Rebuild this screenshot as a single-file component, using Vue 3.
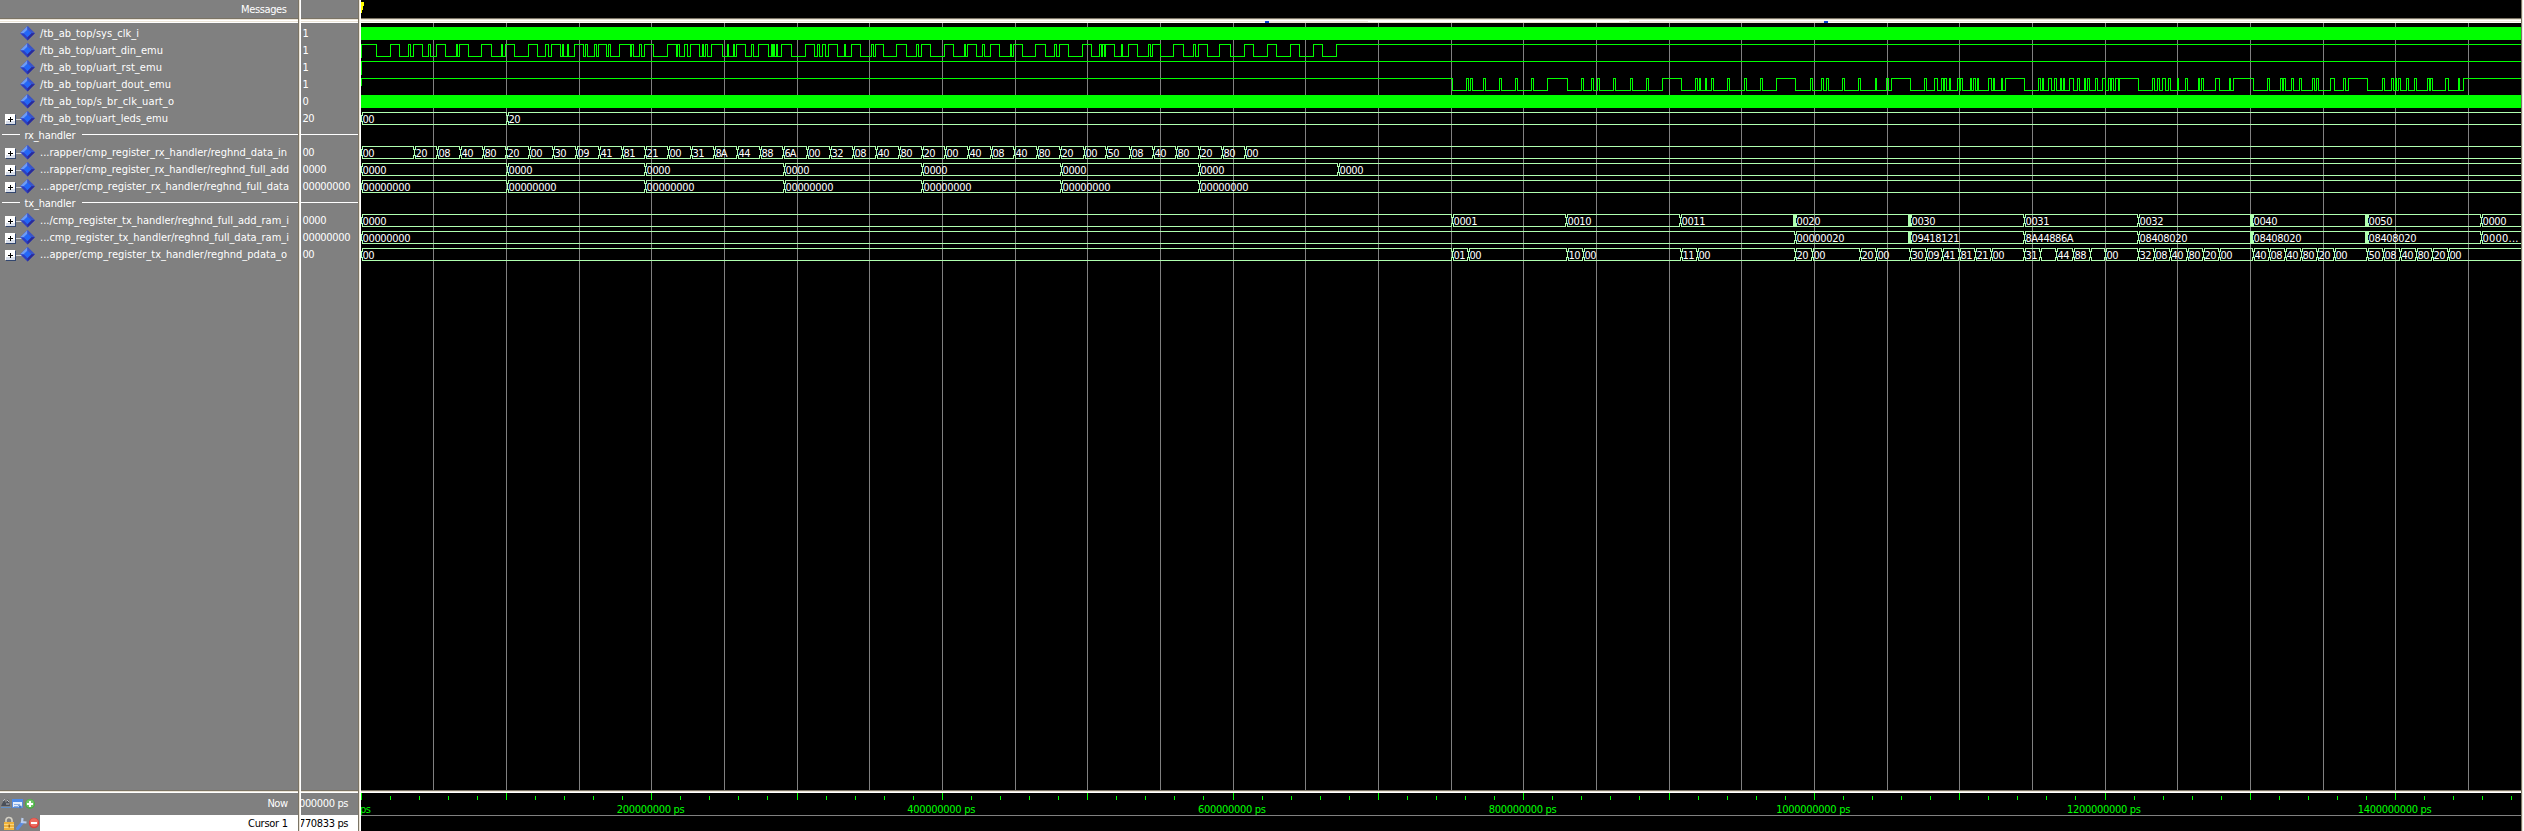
<script setup>
const X0 = 361
const H = 17

const onThirds = (origin, list) => list.map((v) => origin + Math.floor(v / 3))

const dinEdges = [
  ...onThirds(350, [79, 121, 148, 175, 181, 190, 217, 235, 241, 259, 286, 319, 322, 328, 355, 394, 424, 454, 457, 466, 493,
    535, 562, 586, 595, 604, 631, 637, 640, 652, 655, 673, 700, 706, 712, 733, 739, 745, 769, 775, 781, 808, 841, 844, 850,
    868, 874, 883, 910, 952, 979, 982, 988, 1003, 1012, 1021, 1048, 1057, 1060, 1066, 1072, 1084, 1117, 1132, 1135, 1150, 1153,
    1159, 1186, 1204, 1210, 1225, 1255, 1264, 1267, 1270, 1273, 1279, 1282, 1294, 1324, 1366, 1393, 1402, 1408, 1417, 1426,
    1435, 1462, 1483, 1486]),
  ...onThirds(840, [13, 16, 34, 61, 94, 100, 106, 130, 169, 199, 229, 235, 244, 271, 313, 340, 373, 376, 382, 409, 427, 433,
    451, 478, 511, 514, 520, 547, 586, 616, 643, 649, 658, 685, 727, 754, 778, 784, 787, 793, 796, 823, 844, 847, 865, 892,
    925, 931, 937, 961, 1000, 1030, 1060, 1066, 1075, 1102, 1138, 1171, 1213, 1240, 1282, 1309, 1351, 1378, 1420, 1447, 1489])
]
const doutEdges = [
  ...onThirds(1340, [337, 379, 385, 391, 397, 430, 436, 478, 484, 526, 532, 574, 580, 622, 682, 724, 730, 754, 760, 772, 778,
    820, 826, 871, 877, 919, 925, 967, 1024, 1066, 1072, 1078, 1081, 1096, 1099, 1114, 1120, 1162, 1168]),
  ...onThirds(1730, [43, 49, 91, 97, 139, 196, 241, 247, 274, 280, 289, 295, 337, 343, 385, 391, 436, 439, 469, 475, 484, 541,
    583, 589, 613, 622, 634, 640, 643, 649, 658, 661, 682, 688, 691, 697, 721, 724, 730, 736, 742, 745, 775, 784, 790, 793,
    814, 817, 826, 883, 925, 931, 937, 940, 955, 964, 973, 979, 991, 994, 1000, 1003, 1018, 1030, 1042, 1048, 1063, 1066,
    1072, 1078, 1096, 1102, 1117, 1126, 1135, 1141, 1144, 1150, 1156, 1165, 1168]),
  ...onThirds(2120, [55, 97, 103, 112, 118, 127, 136, 145, 151, 172, 175, 196, 202, 235, 238, 244, 250, 286, 298, 328, 331,
    340, 400, 442, 448, 481, 487, 490, 496, 514, 520, 538, 544, 577, 583, 589, 595, 631, 643, 670, 676, 685, 742, 787, 793,
    814, 820, 826, 829, 835, 841, 859, 865, 883, 889, 922, 928, 931, 937, 976, 985, 1015, 1018, 1030])
]

const wave = (edges, start) => {
  let d = `M0.5 ${start}V2.5`
  let high = true
  for (const e of edges) {
    high = !high
    d += `H${e - X0 + 0.5}V${high ? 2.5 : 14.5}`
  }
  return d + 'H2160'
}

const zip = (xs, vals, thick = []) => xs.map((x, i) => ({ x: x - X0, v: vals[i], thick: thick.includes(x) }))

const busPath = (items) => {
  let d = ''
  items.forEach((s, i) => {
    const end = i + 1 < items.length ? items[i + 1].x + 0.5 : 2160
    const a = s.x + 2.5
    const b = s.x + 1.5
    d += `M${b} 5.5V11.5M${a} 5.5V2.5H${end}M${a} 11.5V14.5H${end}`
    if (i + 1 < items.length) d += `M${end} 2.5V5.5M${end} 11.5V14.5`
  })
  return d
}

const leds = zip([360, 506], ['00', '20'])
const dataIn = zip(
  [360, 413, 436, 459, 482, 505, 528, 552, 575, 598, 621, 644, 667, 690, 713, 736, 759, 782, 806, 829, 852, 875, 898, 921, 944,
    967, 990, 1013, 1036, 1059, 1083, 1105, 1129, 1152, 1175, 1198, 1221, 1244],
  '00 20 08 40 80 20 00 30 09 41 81 21 00 31 8A 44 88 6A 00 32 08 40 80 20 00 40 08 40 80 20 00 50 08 40 80 20 80 00'.split(' '))
const rxX = [360, 506, 644, 783, 921, 1060, 1198]
const rxAdd = zip([...rxX, 1337], Array(8).fill('0000'))
const rxData = zip(rxX, Array(7).fill('00000000'))
const txAdd = zip([360, 1451, 1565, 1679, 1794, 1909, 2023, 2137, 2251, 2366, 2480],
  '0000 0001 0010 0011 0020 0030 0031 0032 0040 0050 0000'.split(' '), [1794, 1909, 2251, 2366])
const txData = zip([360, 1794, 1909, 2023, 2137, 2251, 2366, 2480],
  '00000000 00000020 09418121 8A44886A 08408020 08408020 08408020 0000...'.split(' '), [1909, 2251, 2366])
const pdata = zip(
  [360, 1451, 1467, 1566, 1582, 1680, 1696, 1794, 1811, 1859, 1875, 1909, 1925, 1941, 1958, 1974, 1990, 2023, 2039, 2055, 2072,
    2089, 2104, 2137, 2153, 2169, 2186, 2202, 2218, 2252, 2268, 2284, 2300, 2316, 2333, 2366, 2382, 2399, 2415, 2431, 2447],
  '00,01,00,10,00,11,00,20,00,20,00,30,09,41,81,21,00,31,,44,88,,00,32,08,40,80,20,00,40,08,40,80,20,00,50,08,40,80,20,00'.split(','))

const rows = [
  { name: '/tb_ab_top/sys_clk_i', w: 99, value: '1', kind: 'clock' },
  { name: '/tb_ab_top/uart_din_emu', w: 123, value: '1', kind: 'wave', d: wave(dinEdges, 15) },
  { name: '/tb_ab_top/uart_rst_emu', w: 122, value: '1', kind: 'wave', d: wave([], 15) },
  { name: '/tb_ab_top/uart_dout_emu', w: 131, value: '1', kind: 'wave', d: wave(doutEdges, 9) },
  { name: '/tb_ab_top/s_br_clk_uart_o', w: 134, value: '0', kind: 'clock' },
  { name: '/tb_ab_top/uart_leds_emu', w: 128, value: '20', kind: 'bus', items: leds },
  { name: 'rx_handler', w: 51, kind: 'divider' },
  { name: '...rapper/cmp_register_rx_handler/reghnd_data_in', w: 247, value: '00', kind: 'bus', items: dataIn },
  { name: '...rapper/cmp_register_rx_handler/reghnd_full_add', w: 249, value: '0000', kind: 'bus', items: rxAdd },
  { name: '...apper/cmp_register_rx_handler/reghnd_full_data', w: 249, value: '00000000', kind: 'bus', items: rxData },
  { name: 'tx_handler', w: 51, kind: 'divider' },
  { name: '.../cmp_register_tx_handler/reghnd_full_add_ram_i', w: 249, value: '0000', kind: 'bus', items: txAdd },
  { name: '...cmp_register_tx_handler/reghnd_full_data_ram_i', w: 249, value: '00000000', kind: 'bus', items: txData },
  { name: '...apper/cmp_register_tx_handler/reghnd_pdata_o', w: 247, value: '00', kind: 'bus', items: pdata }
]

const textWidth = (t) => (t.endsWith('...') ? 36 : t.length * 6)
const grid = Array.from({ length: 29 }, (_, i) => Math.ceil(433 + (i * 218) / 3 - 0.001) - X0)
const ticks = Array.from({ length: 75 }, (_, k) => ({ x: Math.floor(k * 29.067), major: k % 5 === 0 }))
const labels = Array.from({ length: 7 }, (_, i) => {
  const k = i + 1
  const text = `${k * 2}00000000 ps`
  return { text, x: k * 290.67 - 1, w: text.length * 6 - 4 }
})
</script>

<template>
  <div class="wave-window">
    <section class="pane names">
      <header class="head">
        <svg width="298" height="18"><text x="241" y="13" textLength="46" class="lt">Messages</text></svg>
      </header>
      <div class="hbar thick"></div>
      <div class="body">
        <svg v-for="(r, i) in rows" :key="i" class="row" width="298" :height="H">
          <template v-if="r.kind === 'divider'">
            <path d="M2 7.5H20M82 7.5H298" stroke="#fff" />
            <text x="24.5" y="12" :textLength="r.w" class="lt">{{ r.name }}</text>
          </template>
          <template v-else>
            <template v-if="r.kind === 'bus'">
              <path d="M15 9.5H22" stroke="#d0d0d0" />
              <rect x="6" y="5" width="10" height="10" fill="#33476f" />
              <rect x="5" y="4" width="10" height="10" fill="#fff" />
              <rect x="6" y="11" width="9" height="3" fill="#d8deea" />
              <path d="M8 9.5H13M10.5 7V12" stroke="#000" />
            </template>
            <g class="smooth">
              <path d="M27.5 1L34.8 8.3L27.5 15.6L20.2 8.3Z" fill="#2b3fc4" />
              <path d="M27.5 1L20.2 8.3H27.5Z" fill="#6f9cf4" />
              <path d="M27.5 1L34.8 8.3H27.5Z" fill="#3b55c8" />
              <path d="M27.5 15.6L34.8 8.3H27.5Z" fill="#2a2a98" />
              <path d="M27.5 4.4L31.4 8.3L27.5 12.2L23.6 8.3Z" fill="#2467f6" />
            </g>
            <text x="40" y="12" :textLength="r.w" lengthAdjust="spacing" class="lt">{{ r.name }}</text>
          </template>
        </svg>
      </div>
      <div class="hbar"></div>
      <footer class="foot">
        <div class="now">
          <svg width="298" height="22">
            <g class="smooth">
              <path d="M1 13L4 7L6 10L8 6L10 13Z" fill="#4a4f58" />
              <path d="M3 8L5 6M7 7L9 9M6 11H9" stroke="#b4b8c0" />
              <path d="M1 14.5H11" stroke="#5f8fc8" />
              <rect x="12.5" y="6.5" width="10" height="8" fill="#e6eefb" stroke="#5b8edb" />
              <rect x="12" y="6" width="11" height="3" fill="#4f8ce8" />
              <path d="M14 11.5H20M14 13.5H18" stroke="#8db0e4" />
              <path d="M18 12L22 13L20 16Z" fill="#4779c0" />
              <circle cx="30" cy="11" r="5" fill="#4aa845" />
              <circle cx="30" cy="10.5" r="4" fill="#6cc763" />
              <path d="M27 11H33M30 8V14" stroke="#fff" stroke-width="2" />
            </g>
            <text x="267.5" y="14" textLength="20.5" class="lt">Now</text>
          </svg>
        </div>
        <div class="cursor">
          <svg width="40" height="16" class="tools smooth">
            <path d="M6 8V6A3 3 0 0 1 12 5V8" fill="none" stroke="#d4d0c4" stroke-width="1.6" />
            <rect x="4" y="7" width="10" height="8" fill="#efb23c" />
            <path d="M4 9.5H14M4 12.5H14" stroke="#f9d680" />
            <rect x="8.5" y="9.5" width="1.5" height="3" fill="#a06a1c" />
            <path d="M17.5 13.5L22.5 7.5" stroke="#5b8be0" stroke-width="3" stroke-linecap="round" />
            <path d="M22.5 3L22 7L26.5 7.5" fill="none" stroke="#b9cdee" stroke-width="2.2" />
            <circle cx="34" cy="8" r="5.2" fill="#d8423c" />
            <circle cx="34" cy="7.5" r="4.2" fill="#ec6a5e" />
            <rect x="31" y="7" width="6" height="2" fill="#fff" />
          </svg>
          <svg width="258" height="16"><text x="208" y="12" textLength="40" class="dk">Cursor 1</text></svg>
        </div>
      </footer>
    </section>

    <div class="vbar"></div>

    <section class="pane values">
      <header class="head"></header>
      <div class="hbar thick"></div>
      <div class="body">
        <svg v-for="(r, i) in rows" :key="i" class="row" width="57" :height="H">
          <path v-if="r.kind === 'divider'" d="M0 7.5H57" stroke="#fff" />
          <text v-else x="1.5" y="12" :textLength="r.value.length * 6" class="lt">{{ r.value }}</text>
        </svg>
      </div>
      <div class="hbar"></div>
      <footer class="foot">
        <div class="now"><svg width="57" height="22"><text x="-2" y="14" textLength="49.5" class="lt">000000 ps</text></svg></div>
        <div class="cursor"><svg width="57" height="16"><text x="-2" y="12" textLength="49.5" class="dk">770833 ps</text></svg></div>
      </footer>
    </section>

    <div class="vbar"></div>

    <section class="pane waves">
      <header class="head">
        <svg width="2160" height="18"><path d="M0 2H3V6H2V10H1V13H0Z" fill="#ff0" /></svg>
      </header>
      <div class="hbar thick">
        <svg width="2160" height="5">
          <rect x="904" y="3" width="563" height="2" fill="#ece5d8" />
          <rect x="1007" y="3" width="261" height="1" fill="#fff" />
          <rect x="904" y="3" width="4" height="2" fill="#0a3fd0" />
          <rect x="1463" y="3" width="4" height="2" fill="#0a3fd0" />
        </svg>
      </div>
      <div class="body">
        <svg class="grid-lines" width="2160" height="767">
          <path v-for="x in grid" :key="x" :d="`M${x + 0.5} 0V767`" stroke="#808080" />
        </svg>
        <svg v-for="(r, i) in rows" :key="i" class="row" width="2160" :height="H">
          <rect v-if="r.kind === 'clock'" y="2" width="2160" height="13" fill="#0f0" />
          <path v-else-if="r.kind === 'wave'" :d="r.d" fill="none" stroke="#0f0" stroke-linecap="square" />
          <template v-else-if="r.kind === 'bus'">
            <path :d="busPath(r.items)" fill="none" stroke="#b0ffb0" stroke-linecap="square" />
            <template v-for="s in r.items" :key="s.x">
              <rect v-if="s.thick" :x="s.x - 1" y="2" width="3" height="13" fill="#b0ffb0" />
              <text v-if="s.v" :x="s.x + 2.5" y="13" :textLength="textWidth(s.v)" class="lt">{{ s.v }}</text>
            </template>
          </template>
        </svg>
      </div>
      <div class="hbar"></div>
      <footer class="foot">
        <svg width="2160" height="38">
          <path v-for="t in ticks" :key="t.x" :d="`M${t.x + 0.5} ${t.major ? 0 : 3}V7`" stroke="#0f0" />
          <text x="-1" y="20" textLength="11" class="gr">ps</text>
          <text v-for="l in labels" :key="l.text" :x="l.x - l.w / 2" y="20" :textLength="l.w" class="gr">{{ l.text }}</text>
          <path d="M0 22.5H2160" stroke="#808080" />
        </svg>
      </footer>
    </section>

    <div class="vbar"></div>
  </div>
</template>

<style>
body {
  margin: 0;
  background: #000;
  overflow: hidden;
}
</style>

<style scoped>
.wave-window {
  display: flex;
  width: 2524px;
  height: 831px;
  overflow: hidden;
  font-family: "DejaVu Sans Condensed", "DejaVu Sans", "Noto Sans", sans-serif;
  font-stretch: condensed;
  font-size: 11px;
}
svg {
  display: block;
  flex: none;
  shape-rendering: crispEdges;
}
.smooth {
  shape-rendering: geometricPrecision;
}
text {
  font-size: 11px;
}
.lt {
  fill: #fff;
}
.dk {
  fill: #000;
}
.gr {
  fill: #0f0;
}
.pane {
  display: flex;
  flex-direction: column;
  flex: none;
  overflow: hidden;
  background: #808080;
}
.names {
  width: 298px;
}
.values {
  width: 57px;
}
.waves {
  width: 2160px;
  background: #000;
}
.head {
  height: 18px;
  flex: none;
}
.hbar {
  height: 3px;
  flex: none;
  background: linear-gradient(#7b7465 1px, #ece5d8 1px 2px, #fff 2px);
}
.hbar.thick {
  height: 5px;
  background: linear-gradient(#7b7465 1px, #ece5d8 1px 2px, #fff 2px 3px, #ece5d8 3px 4px, #fff 4px);
}
.vbar {
  width: 3px;
  flex: none;
  background: linear-gradient(90deg, #7b7465 1px, #ece5d8 1px 2px, #fff 2px);
}
.body {
  position: relative;
  box-sizing: border-box;
  height: 767px;
  flex: none;
  padding-top: 2px;
}
.grid-lines {
  position: absolute;
  left: 0;
  top: 0;
}
.row {
  position: relative;
}
.foot {
  height: 38px;
  flex: none;
}
.now {
  height: 22px;
}
.cursor {
  display: flex;
  height: 16px;
  background: #fff;
}
.tools {
  background: #808080;
}
</style>
